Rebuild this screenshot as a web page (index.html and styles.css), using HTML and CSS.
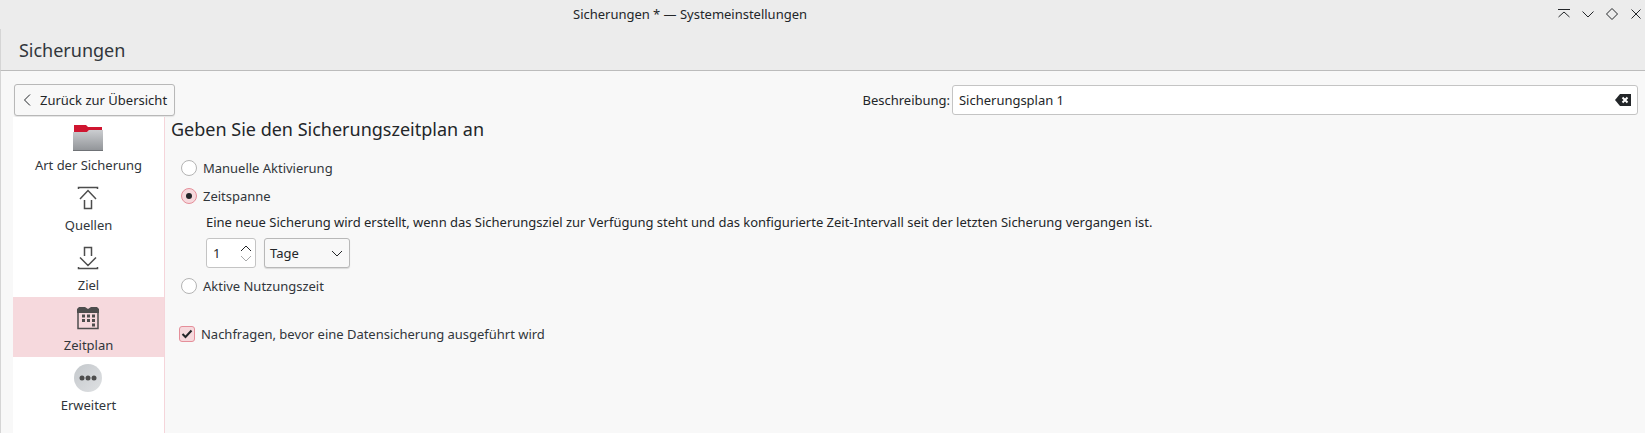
FILE: index.html
```html
<!DOCTYPE html>
<html lang="de">
<head>
<meta charset="utf-8">
<title>Sicherungen</title>
<link rel="stylesheet" href="styles.css">
</head>
<body>
<div class="window">
  <header class="titlebar">
    <div class="wintitle">Sicherungen * — Systemeinstellungen</div>
    <div class="winbtns">
      <svg width="14" height="14" viewBox="0 0 14 14"><path d="M1 2.500H13M1.500 10L7 5l5.500 5" class="ic"/></svg>
      <svg width="14" height="14" viewBox="0 0 14 14"><path d="M1.500 4.500L7 10l5.500-5.500" class="ic"/></svg>
      <svg width="14" height="14" viewBox="0 0 14 14"><path d="M7 1.500L12.500 7 7 12.500 1.500 7z" class="ic"/></svg>
      <svg width="14" height="14" viewBox="0 0 14 14"><path d="M2.500 2.500l9 9M11.500 2.500l-9 9" class="ic"/></svg>
    </div>
  </header>
  <div class="pagehead">Sicherungen</div>
  <main class="content">
    <div class="toprow">
      <button class="backbtn">
        <svg width="12" height="16" viewBox="0 0 12 16"><path d="M9 2.500L3.500 8 9 13.500" class="ic"/></svg>
        <span>Zurück zur Übersicht</span>
      </button>
      <label class="desclabel">Beschreibung:</label>
      <div class="descfield">
        <span>Sicherungsplan 1</span>
        <svg width="16" height="12" viewBox="0 0 16 12"><path d="M5 0H16V12H5L0 6z" fill="#232629"/><path d="M7.500 3.500l5 5M12.500 3.500l-5 5" stroke="#fff" stroke-width="2" fill="none"/></svg>
      </div>
    </div>
    <div class="body">
      <nav class="sidebar">
        <div class="navitem">
          <svg width="32" height="32" viewBox="0 0 32 32">
            <defs><linearGradient id="fg" x1="0" y1="0" x2="0" y2="1"><stop offset="0" stop-color="#cbcdd0"/><stop offset="1" stop-color="#909397"/></linearGradient></defs>
            <path d="M1 10H15L17 8H31V29H1z" fill="url(#fg)"/>
            <path d="M1 28H31V29H1z" fill="#6f7276"/>
            <path d="M2 3H14L16 5H30V8H17L15 10H2z" fill="#cf1530"/>
          </svg>
          <span>Art der Sicherung</span>
        </div>
        <div class="navitem">
          <svg width="32" height="32" viewBox="0 0 32 32"><path d="M6.500 7V5.500H25.500V7M8 17L16 8.500 24 17M12.500 18V26.500H19.500V18" class="ic2"/></svg>
          <span>Quellen</span>
        </div>
        <div class="navitem">
          <svg width="32" height="32" viewBox="0 0 32 32"><path d="M6.500 25V26.500H25.500V25M8 15.500L16 23.500 24 15.500M12.500 14V5.500H19.500V14" class="ic2"/></svg>
          <span>Ziel</span>
        </div>
        <div class="navitem active">
          <svg width="32" height="32" viewBox="0 0 32 32">
            <path d="M6 9.500H26V26.500H6z" class="ic2"/>
            <path d="M5 7L7 5H13L16 7 19 5H25L27 7V11H5z" fill="#4d4d4d"/>
            <g fill="#4d4d4d"><rect x="10" y="12.500" width="3" height="3"/><rect x="15" y="12.500" width="3" height="3"/><rect x="20" y="12.500" width="3" height="3"/><rect x="10" y="17" width="3" height="3"/><rect x="15" y="17" width="3" height="3"/><rect x="20" y="17" width="3" height="3"/><rect x="20" y="21.500" width="3" height="3"/></g>
          </svg>
          <span>Zeitplan</span>
        </div>
        <div class="navitem">
          <svg width="32" height="32" viewBox="0 0 32 32">
            <defs><linearGradient id="cg" x1="0" y1="0" x2="1" y2="1"><stop offset="0" stop-color="#c4c8cc"/><stop offset="1" stop-color="#dfe1e3"/></linearGradient></defs>
            <circle cx="16" cy="16" r="14" fill="url(#cg)"/>
            <circle cx="10" cy="16" r="2.500" fill="#4d4d4d"/><circle cx="16" cy="16" r="2.500" fill="#4d4d4d"/><circle cx="22" cy="16" r="2.500" fill="#4d4d4d"/>
          </svg>
          <span>Erweitert</span>
        </div>
      </nav>
      <section class="panel">
        <h1 class="heading">Geben Sie den Sicherungszeitplan an</h1>
        <div class="options">
          <div class="opt"><span class="radio"></span><span>Manuelle Aktivierung</span></div>
          <div class="opt"><span class="radio on"></span><span>Zeitspanne</span></div>
          <div class="sub">
            <p class="desc">Eine neue Sicherung wird erstellt, wenn das Sicherungsziel zur Verfügung steht und das konfigurierte Zeit-Intervall seit der letzten Sicherung vergangen ist.</p>
            <div class="controls">
              <div class="spin">
                <span>1</span>
                <span class="arrows">
                  <svg width="12" height="7" viewBox="0 0 12 7"><path d="M1 6l5-5 5 5" class="ic"/></svg>
                  <svg width="12" height="7" viewBox="0 0 12 7"><path d="M1 1l5 5 5-5" class="ic dim"/></svg>
                </span>
              </div>
              <div class="combo">
                <span>Tage</span>
                <svg width="12" height="7" viewBox="0 0 12 7"><path d="M1 1l5 5 5-5" class="ic"/></svg>
              </div>
            </div>
          </div>
          <div class="opt"><span class="radio"></span><span>Aktive Nutzungszeit</span></div>
        </div>
        <div class="check">
          <span class="box"><svg width="12" height="10" viewBox="0 0 12 10"><path d="M1.500 5l3 3 6-6.500" fill="none" stroke="#232629" stroke-width="2"/></svg></span>
          <span>Nachfragen, bevor eine Datensicherung ausgeführt wird</span>
        </div>
      </section>
    </div>
  </main>
</div>
</body>
</html>
```
FILE: styles.css
```css
* { box-sizing: border-box; }
html, body { margin: 0; padding: 0; }
body {
  width: 1645px;
  height: 433px;
  overflow: hidden;
  font-family: "Noto Sans", sans-serif;
  font-size: 13px;
  letter-spacing: -0.015px;
  color: #232629;
  background: #ececec;
}
.window { display: flex; flex-direction: column; height: 433px; }
.ic { fill: none; stroke: #232629; stroke-width: 1; }
.ic.dim { stroke: #a8a9aa; }
.ic2 { fill: none; stroke: #4d4d4d; stroke-width: 1.500; }
.titlebar {
  height: 29px;
  display: flex;
  align-items: center;
  justify-content: center;
  position: relative;
  flex: none;
  padding-right: 265px;
}
.wintitle { line-height: 29px; }
.winbtns {
  position: absolute;
  right: 2px;
  top: 7px;
  display: flex;
  gap: 10px;
}
.pagehead {
  flex: none;
  height: 42px;
  padding-left: 18px;
  border-left: 1px solid #d5d5d5;
  border-bottom: 1px solid #bcbcbc;
  font-size: 18px;
  line-height: 43px;
  color: #31363b;
}
.content {
  flex: 1;
  display: flex;
  flex-direction: column;
  background: #f8f8f8;
  border-left: 1px solid #d5d5d5;
  padding-left: 12px;
  min-height: 0;
}
.toprow {
  flex: none;
  display: flex;
  align-items: center;
  height: 46px;
  padding-top: 12px;
  padding-bottom: 1px;
  padding-right: 7px;
}
.backbtn {
  width: 161px;
  height: 32px;
  margin-left: 1px;
  padding: 0 0 0 6px;
  display: flex;
  align-items: center;
  gap: 7px;
  font: inherit;
  color: #232629;
  background: #f8f8f8;
  border: 1px solid #b8b8b8;
  border-radius: 3px;
  box-shadow: 0 1px 1px rgba(0,0,0,.08);
}
.desclabel { margin-left: auto; margin-right: 2px; }
.descfield {
  width: 686px;
  height: 30px;
  display: flex;
  align-items: center;
  justify-content: space-between;
  padding: 0 6px;
  background: #fff;
  border: 1px solid #c4c4c4;
  border-radius: 3px;
}
.body { flex: 1; display: flex; min-height: 0; }
.sidebar {
  width: 152px;
  flex: none;
  background: #fff;
  border-right: 1px solid #f5d5da;
}
.navitem {
  height: 60px;
  display: flex;
  flex-direction: column;
  align-items: center;
  color: #31363b;
  line-height: 18px;
  padding-top: 5px;
  gap: 2px;
}
.navitem svg { display: block; flex: none; margin-right: 2px; }
.navitem.active { background: #f6d9dd; }
.panel { flex: 1; padding-left: 6px; }
.heading {
  margin: 0;
  font-size: 18px;
  letter-spacing: 0;
  font-weight: 400;
  line-height: 24px;
  height: 28px;
  color: #232629;
}
.options { padding-left: 10px; padding-top: 9px; }
.opt {
  height: 28px;
  display: flex;
  align-items: center;
  gap: 6px;
  color: #31363b;
}
.radio {
  width: 16px;
  height: 16px;
  flex: none;
  border-radius: 50%;
  border: 1px solid #b4b4b4;
  background: #fff;
  display: flex;
  align-items: center;
  justify-content: center;
}
.radio.on { background: #f6d9dd; border-color: #e58f9a; }
.radio.on::after {
  content: "";
  width: 6px;
  height: 6px;
  border-radius: 50%;
  background: #232629;
}
.sub { padding-left: 25px; }
.desc { margin: 0; height: 28px; line-height: 24px; }
.controls { display: flex; gap: 8px; height: 30px; margin-bottom: 4px; }
.spin {
  width: 50px;
  display: flex;
  align-items: center;
  justify-content: space-between;
  padding: 0 1px 0 6px;
  background: #fff;
  border: 1px solid #c4c4c4;
  border-radius: 3px;
}
.arrows { display: flex; flex-direction: column; gap: 3px; margin-right: 2px; }
.arrows svg { display: block; }
.combo {
  width: 86px;
  display: flex;
  align-items: center;
  justify-content: space-between;
  padding: 0 6px 0 5px;
  background: #f8f8f8;
  border: 1px solid #b8b8b8;
  border-radius: 3px;
  box-shadow: 0 1px 1px rgba(0,0,0,.12);
}
.check {
  display: flex;
  align-items: center;
  gap: 6px;
  margin-top: 25px;
  margin-left: 8px;
  height: 18px;
  color: #31363b;
}
.box {
  width: 16px;
  height: 16px;
  flex: none;
  display: flex;
  align-items: center;
  justify-content: center;
  background: #f6d9dd;
  border: 1px solid #e58f9a;
  border-radius: 3px;
}
```
